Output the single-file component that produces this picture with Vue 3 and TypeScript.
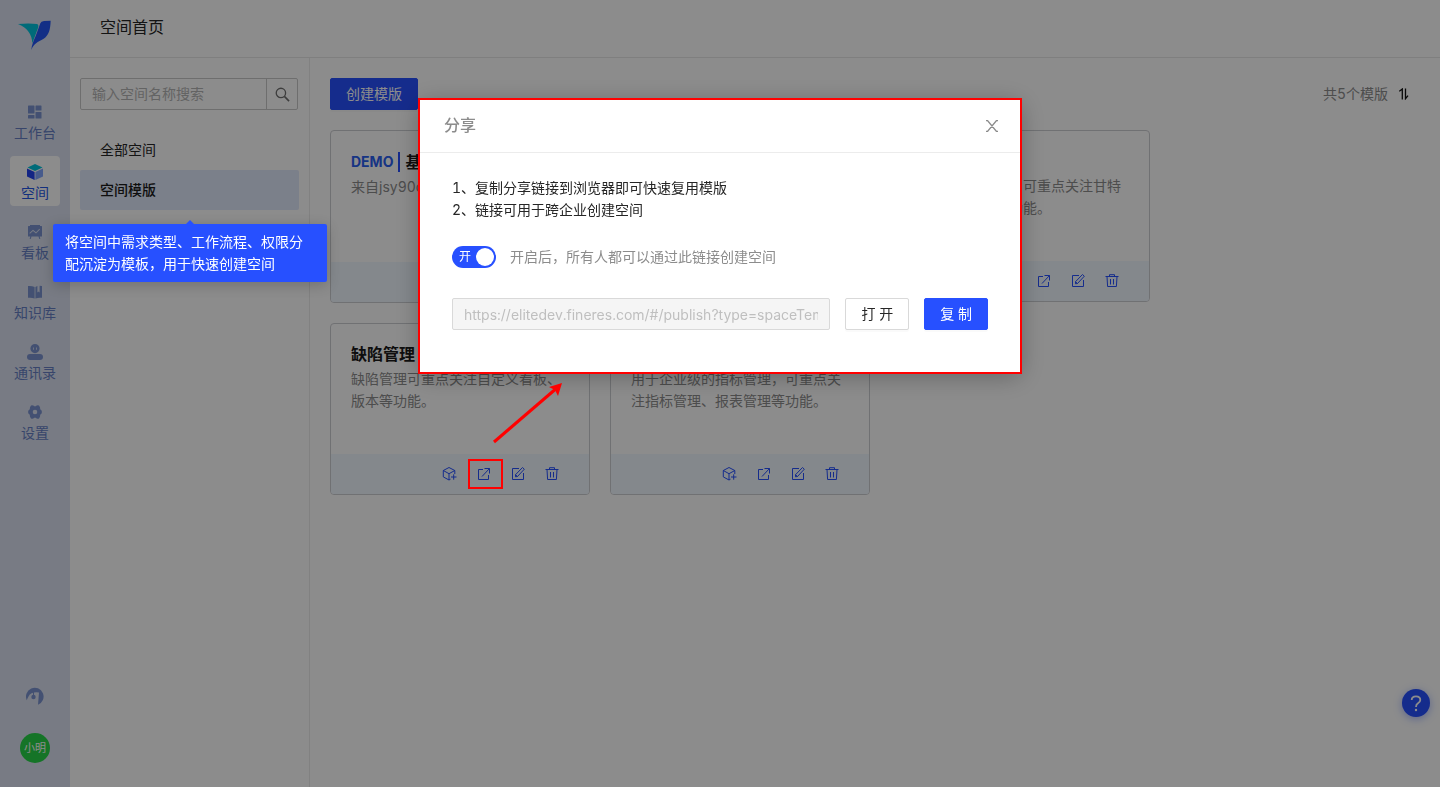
<script setup lang="ts">
import { ref } from 'vue'

interface NavItem { key: string; label: string }
interface Card { title: string; desc: string; demo?: boolean; actions: boolean }

const nav: NavItem[] = [
  { key: 'work', label: '工作台' },
  { key: 'space', label: '空间' },
  { key: 'board', label: '看板' },
  { key: 'wiki', label: '知识库' },
  { key: 'contacts', label: '通讯录' },
  { key: 'settings', label: '设置' },
]
const activeNav = ref('space')

const cards: Card[] = [
  { title: '基础模版', desc: '来自jsy90c', demo: true, actions: false },
  { title: '敏捷研发', desc: '', actions: true },
  { title: '瀑布管理', desc: '瀑布项目管理中，可重点关注甘特图、版本计划等功能。', actions: true },
  { title: '缺陷管理', desc: '缺陷管理可重点关注自定义看板、版本等功能。', actions: true },
  { title: '指标管理', desc: '用于企业级的指标管理，可重点关注指标管理、报表管理等功能。', actions: true },
]

const keyword = ref('')
const shared = ref(true)
const link = ref('https://elitedev.fineres.com/#/publish?type=spaceTemplate')
</script>

<template>
  <div class="page" lang="zh-CN">
    <aside class="side">
      <svg class="logo" viewBox="0 0 96 90" aria-hidden="true">
        <path d="M-3 12Q30 9 54 12Q60 14 57 24L40 70Q38 28 -3 12Z" fill="#00c4dc" />
        <path d="M64 10Q66 4 75 3L95 2C94 30 89 46 74 56C56 66 44 70 37 90C38 76 43 64 50 48Z" fill="#2456f5" />
      </svg>
      <nav class="nav">
        <a v-for="n in nav" :key="n.key" href="#" class="nav-item" :class="{ active: n.key === activeNav }" @click.prevent="activeNav = n.key">
          <svg class="nav-icon" viewBox="0 0 16 16" fill="currentColor" aria-hidden="true">
            <template v-if="n.key === 'work'">
              <rect x="1" y="1.500" width="6.500" height="8" rx=".6" />
              <rect x="1" y="11" width="6.500" height="3.500" rx=".6" />
              <rect x="8.500" y="1.500" width="6" height="5" rx=".6" />
              <rect x="8.500" y="8" width="6" height="6.500" rx=".6" />
            </template>
            <template v-else-if="n.key === 'space'">
              <path d="M8 0L15.500 3.500L8 7L.5 3.500Z" fill="#00c4dc" />
              <path d="M0 4.500L7.600 8V16L0 12.500Z" fill="#2444f0" />
              <path d="M16 4.500L8.400 8V16L16 12.500Z" fill="#82a6ff" />
            </template>
            <template v-else-if="n.key === 'board'">
              <path fill-rule="evenodd" d="M3 1H13V2H14.500Q15 2 15 2.500V12.500H12.700L13.300 15H12.300L11.500 12.500H4.500L3.700 15H2.700L3.300 12.500H1V2.500Q1 2 1.500 2H3ZM3 9.700L6 7L9 9.500L13 5.500L12.400 4.800L9 8.200L6 5.700L2.400 9Z" />
            </template>
            <template v-else-if="n.key === 'wiki'">
              <path d="M1 2Q4.500 1.500 7.600 3V14.500Q4.500 13.300 1 13.800Z" />
              <path d="M8.400 3L10.400 2V8.500L11.500 7.500L12.600 8.500V1.800L15 2V13.800Q11.500 13.300 8.400 14.500Z" />
            </template>
            <template v-else-if="n.key === 'contacts'">
              <path fill-rule="evenodd" d="M8 0A4.600 4.600 0 0 1 8 9.200A4.600 4.600 0 0 1 8 0ZM6 3.500V5.700H6.800V3.500ZM9.200 3.500V5.700H10V3.500Z" />
              <rect x="0" y="10" width="16" height="6" rx="3" />
            </template>
            <template v-else>
              <path fill-rule="evenodd" d="M4 1.500Q5 .8 6.200 1.500L8 2.500L9.800 1.500Q11 .8 12 1.500L13 3.300L13.200 5.300L14.600 6.500Q15.200 8 14.600 9.500L13.200 10.700L13 12.700L12 14.500Q11 15.200 9.800 14.500L8 13.500L6.200 14.500Q5 15.200 4 14.500L3 12.700L2.800 10.700L1.400 9.500Q.8 8 1.400 6.500L2.800 5.300L3 3.300ZM8 5.700A2.300 2.300 0 0 0 8 10.300A2.300 2.300 0 0 0 8 5.700Z" />
            </template>
          </svg>
          <span>{{ n.label }}</span>
        </a>
      </nav>
      <div class="side-foot">
        <button class="service" aria-label="客服">
          <svg viewBox="0 0 18 18" fill="none" aria-hidden="true">
            <path d="M.8 13.200A8.800 8.800 0 1 1 12 17.700L13 5.500Q5 4.500 2.500 9.500Q1.500 11 .8 13.200Z" fill="currentColor" />
            <path d="M7.500 4V9" stroke="currentColor" stroke-width="1" />
            <circle cx="7.500" cy="10" r="2.200" fill="currentColor" />
          </svg>
        </button>
        <button class="avatar">小明</button>
      </div>
    </aside>

    <div class="content">
      <header class="head"><h1>空间首页</h1></header>
      <div class="body">
        <section class="panel">
          <form class="search" role="search" @submit.prevent>
            <input v-model="keyword" type="text" aria-label="空间名称" placeholder="输入空间名称搜索" />
            <button aria-label="搜索">
              <svg viewBox="0 0 16 16" fill="none" stroke="currentColor" stroke-width="1.400" aria-hidden="true">
                <circle cx="6.300" cy="6.300" r="5" /><path d="M10 10L15 15" stroke-width="1.700" />
              </svg>
            </button>
          </form>
          <ul class="menu">
            <li><a href="#">全部空间</a></li>
            <li class="on">
              <a href="#" aria-describedby="tip">空间模版</a>
              <div id="tip" class="tip" role="tooltip">将空间中需求类型、工作流程、权限分配沉淀为模板，用于快速创建空间</div>
            </li>
          </ul>
        </section>

        <main class="main">
          <div class="bar">
            <button class="btn primary">创建模版</button>
            <div class="count">
              <span>共5个模版</span>
              <button class="sort" aria-label="排序">
                <svg viewBox="0 0 10 12" fill="none" stroke="currentColor" stroke-width="1.300" aria-hidden="true">
                  <path d="M.3 3.300L3.300 1V11.500M6.500 .5V10.700L9 7.600" />
                </svg>
              </button>
            </div>
          </div>
          <div class="grid">
            <article v-for="c in cards" :key="c.title" class="card">
              <h2 :class="{ demo: c.demo }"><span v-if="c.demo" class="tag">DEMO</span>{{ c.title }}</h2>
              <p>{{ c.desc }}</p>
              <footer>
                <template v-if="c.actions">
                  <button aria-label="创建空间">
                    <svg viewBox="0 0 14 14" aria-hidden="true"><path d="M11.800 7V3.500L6 .5L.3 3.500V9.900L6 13L7.500 12.200M.3 3.500L6 6.700L11.800 3.500M6 6.700V13M8 10H13.500M10.700 7.300V12.700" /></svg>
                  </button>
                  <button aria-label="分享">
                    <svg viewBox="0 0 14 14" aria-hidden="true"><path d="M6 2.500H1.500V12.500H11.500V8M7.500 1.500H12.500V6.500M12.500 1.500L5 9.500" /></svg>
                  </button>
                  <button aria-label="编辑">
                    <svg viewBox="0 0 14 14" aria-hidden="true"><path d="M8 1.500H1.500V12.500H12.500V6M4.500 9.800V7.700L11.500 .5L13.300 2.200L6.500 9.500L4.500 9.800M4.500 7.700L6.500 9.500" /></svg>
                  </button>
                  <button aria-label="删除">
                    <svg viewBox="0 0 14 14" aria-hidden="true"><path d="M.5 2.500H13.500M4.500 2.500V.7H9.500V2.500M2 2.500L2.600 12.500H11.400L12 2.500M5.500 5V10.500M8.500 5V10.500" /></svg>
                  </button>
                </template>
              </footer>
            </article>
          </div>
        </main>
      </div>
    </div>

    <button class="help" aria-label="帮助">
      <svg viewBox="0 0 28 28" fill="none" stroke="currentColor" stroke-width="1.800" aria-hidden="true">
        <path d="M9.700 11Q9.700 7.300 14 7.300Q18.300 7.300 18.300 11Q18.300 12.800 16 14.200Q14 15.400 14 18" />
        <circle cx="14" cy="21" r="1.200" fill="currentColor" stroke="none" />
      </svg>
    </button>

    <div class="mask">
      <div class="modal" role="dialog" aria-modal="true" aria-labelledby="dlg">
        <header class="modal-head">
          <h2 id="dlg">分享</h2>
          <button aria-label="关闭">
            <svg viewBox="0 0 12 12" fill="none" stroke="currentColor" stroke-width="1.300" aria-hidden="true"><path d="M0 .5H1.500L10.500 11.500H12M12 .5H10.500L1.500 11.500H0" /></svg>
          </button>
        </header>
        <div class="modal-body">
          <p>1、复制分享链接到浏览器即可快速复用模版</p>
          <p>2、链接可用于跨企业创建空间</p>
          <label class="toggle">
            <input v-model="shared" type="checkbox" role="switch" />
            <span class="track">{{ shared ? '开' : '关' }}</span>
            <span>开启后，所有人都可以通过此链接创建空间</span>
          </label>
          <div class="share">
            <input v-model="link" type="text" aria-label="分享链接" disabled />
            <button class="btn">打 开</button>
            <button class="btn primary">复 制</button>
          </div>
        </div>
      </div>
    </div>

    <svg class="marks" viewBox="0 0 110 120" fill="none" aria-hidden="true">
      <rect x="9" y="85" width="33" height="28" stroke="#f00" stroke-width="2" />
      <path d="M34 67L98 12" stroke="#f00" stroke-width="3" stroke-linecap="butt" />
      <path d="M102 8L98 21L95 15L89 12Z" fill="#f00" />
    </svg>
  </div>
</template>

<style>
body { margin: 0; }
</style>

<style scoped>
* { box-sizing: border-box; }
.page { position: relative; display: flex; min-height: 100vh; background: #fff; color: #262626; font: 14px/22px Inter, "Noto Sans CJK SC", sans-serif; font-variant-numeric: tabular-nums; }
button { padding: 0; border: 0; background: none; color: inherit; font: inherit; cursor: pointer; }
button svg { display: block; }
input { min-width: 0; font: inherit; }
a { color: inherit; text-decoration: none; }
h1, h2, p, ul { margin: 0; padding: 0; font-weight: 400; list-style: none; }

.side { display: flex; flex-direction: column; flex: none; align-items: center; width: 70px; padding: 20px 0 24px; background: #dae0f0; color: #7b93d0; }
.logo { width: 32px; height: 30px; overflow: visible; }
.nav { display: flex; flex-direction: column; gap: 10px; margin-top: 46px; }
.nav-item { display: flex; flex-direction: column; align-items: center; gap: 2px; width: 50px; height: 50px; padding-top: 8px; border-radius: 4px; white-space: nowrap; color: #667fc4; }
.nav-icon { width: 16px; height: 16px; color: #7b93d0; }
.nav-item.active { background: #fff; color: #2457e6; }
.side-foot { display: flex; flex-direction: column; align-items: center; gap: 28px; margin-top: auto; }
.service svg { width: 18px; height: 18px; }
.avatar { width: 30px; height: 30px; border-radius: 50%; background: #27d448; color: #fff; font-size: 11px; }

.content { display: flex; flex: 1; flex-direction: column; min-width: 0; }
.head { padding: 15px 30px 18px; border-bottom: 1px solid #e8e8e8; }
.head h1 { font-size: 16px; line-height: 24px; }
.body { display: flex; flex: 1; }
.panel { flex: none; width: 240px; padding: 20px 10px; border-right: 1px solid #ebebeb; }
.search { display: flex; height: 32px; margin-right: 1px; border: 1px solid #c9c9c9; border-radius: 2px; }
.search input { flex: 1; padding: 0 11px; border: 0; background: none; outline: 0; }
.search input::placeholder { color: #b4b4b4; }
.search button { display: grid; place-items: center; width: 31px; border-left: 1px solid #c9c9c9; color: #707070; }
.search svg { width: 15px; height: 15px; }
.menu { margin-top: 20px; }
.menu li { position: relative; border-radius: 2px; }
.menu a { display: block; padding: 9px 20px; }
.menu .on { background: #e1e9fb; }
.menu .on a { font-weight: 500; color: #1a1a1a; }
.tip { position: absolute; z-index: 20; top: 54px; left: -27px; width: 274px; padding: 7px 12px; border-radius: 2px; background: #2750ff; box-shadow: 0 3px 14px rgba(0, 0, 0, .2); color: #fff; }
.tip::before { content: ""; position: absolute; top: -4px; left: 133px; border: 4px solid transparent; border-top: 0; border-bottom-color: #2750ff; }

.main { flex: 1; min-width: 0; padding: 20px; }
.bar { display: flex; align-items: center; justify-content: space-between; margin-bottom: 20px; }
.btn { height: 32px; padding: 0 15px; border: 1px solid #d9d9d9; border-radius: 2px; background: #fff; box-shadow: 0 2px 0 rgba(0, 0, 0, .02); white-space: nowrap; }
.btn.primary { border-color: #2750ff; background: #2750ff; color: #fff; }
.count { display: flex; align-items: center; gap: 11px; margin-right: 11px; color: #8c8c8c; }
.sort svg { width: 10px; height: 12px; color: #111; }
.grid { display: grid; grid-template-columns: repeat(auto-fill, 260px); align-items: start; gap: 20px; max-width: 1000px; }
.card { overflow: hidden; border: 1px solid #ccced2; border-radius: 4px; }
.card h2 { display: flex; align-items: center; height: 24px; margin: 18px 20px 2px; color: #1a1a1a; font-size: 16px; font-weight: 600; line-height: 24px; }
.card h2.demo { height: 25px; }
.tag { margin-right: 5px; padding-right: 5px; border-right: 2px solid #2750ff; color: #2a60f0; font-size: 14px; line-height: 20px; font-weight: 700; }
.card p { min-height: 86px; padding: 0 20px; color: #8c8c8c; }
.card footer { display: flex; align-items: center; justify-content: flex-end; gap: 20px; height: 40px; padding-right: 30px; background: #f0f8ff; color: #2750ff; }
.card footer svg { width: 14px; height: 14px; overflow: visible; fill: none; stroke: currentColor; stroke-width: 1; }
.help { position: fixed; right: 10px; bottom: 70px; width: 28px; height: 28px; border-radius: 50%; background: #2750ff; box-shadow: 0 2px 8px rgba(39, 80, 255, .4); color: #fff; }

.mask { position: fixed; z-index: 10; inset: 0; padding-top: 100px; background: rgba(0, 0, 0, .45); }
.modal { width: 600px; max-width: 100%; margin: 0 auto; outline: 2px solid #f00; background: #fff; box-shadow: 0 4px 24px rgba(0, 0, 0, .3); }
.modal-head { display: flex; align-items: center; justify-content: space-between; height: 53px; padding: 0 22px 0 24px; border-bottom: 1px solid #ececec; color: #8c8c8c; }
.modal-head h2 { padding-bottom: 2px; font-size: 16px; font-weight: 500; }
.modal-head svg { width: 12px; height: 12px; }
.modal-body { padding: 24px 32px 42px; }
.toggle { display: flex; align-items: center; gap: 14px; margin-top: 25px; color: #8c8c8c; cursor: pointer; }
.toggle input { position: absolute; opacity: 0; }
.track { position: relative; width: 44px; height: 22px; padding-left: 7px; border-radius: 11px; background: #2750ff; color: #fff; font-size: 12px; }
.track::after { content: ""; position: absolute; top: 2px; right: 2px; width: 18px; height: 18px; border-radius: 50%; background: #fff; }
.share { display: flex; gap: 15px; margin-top: 30px; }
.share input { flex: 1; height: 32px; padding: 0 11px; border: 1px solid #d9d9d9; border-radius: 2px; background: #f5f5f5; color: #bfbfbf; }
.marks { position: absolute; z-index: 30; top: 375px; left: 460px; width: 110px; height: 120px; pointer-events: none; }
</style>
